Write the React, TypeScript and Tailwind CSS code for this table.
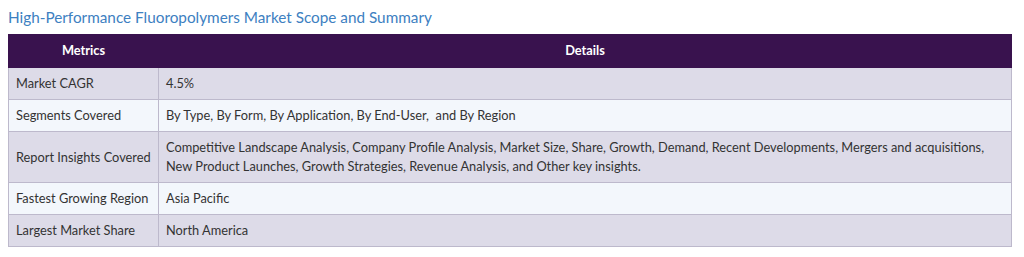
import React from 'react';

const rows: [string, string][] = [
  ['Market CAGR', '4.5%'],
  ['Segments Covered', 'By Type, By Form, By Application, By End-User,  and By Region'],
  [
    'Report Insights Covered',
    'Competitive Landscape Analysis, Company Profile Analysis, Market Size, Share, Growth, Demand, Recent Developments, Mergers and acquisitions, New Product Launches, Growth Strategies, Revenue Analysis, and Other key insights.',
  ],
  ['Fastest Growing Region', 'Asia Pacific'],
  ['Largest Market Share', 'North America'],
];

export default function App() {
  return (
    <div className="w-[1024px] h-[257px] bg-white px-[8px] pt-[7px] font-['Lato','Open_Sans',sans-serif]">
      <h2 className="text-[15.3px] leading-[20px] text-[#3d80c1] mb-[7px] whitespace-pre">
        High-Performance Fluoropolymers Market Scope and Summary
      </h2>
      <table className="w-[1004px] table-fixed border-collapse text-[12.8px] text-[#333333]">
        <colgroup>
          <col className="w-[150px]" />
          <col />
        </colgroup>
        <thead>
          <tr className="bg-[#39124e] text-white h-[33px]">
            <th className="border border-[#39124e] font-bold text-center">Metrics</th>
            <th className="border border-[#39124e] font-bold text-center">Details</th>
          </tr>
        </thead>
        <tbody>
          {rows.map(([metric, detail], i) => (
            <tr key={metric} className={i % 2 === 0 ? 'bg-[#dddbe8]' : 'bg-[#f3f7fc]'}>
              <td className="border border-[#bdb9cc] px-[7px] py-[6px] leading-[19px] whitespace-nowrap">
                {metric}
              </td>
              <td className="border border-[#bdb9cc] px-[7px] py-[6px] leading-[19px] whitespace-pre-wrap">
                {detail}
              </td>
            </tr>
          ))}
        </tbody>
      </table>
    </div>
  );
}
